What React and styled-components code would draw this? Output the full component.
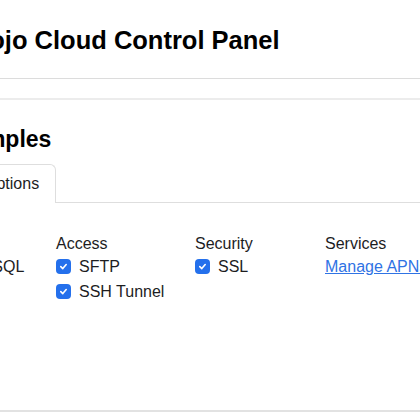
import React from 'react';
import styled, { createGlobalStyle } from 'styled-components';

const GlobalStyle = createGlobalStyle`
    html, body {
        margin: 0;
        padding: 0;
        background: #fff;
        overflow: hidden;
    }
    body {
        font-family: "Liberation Sans", Arial, Helvetica, sans-serif;
        color: #1d1d1f;
    }
`;

const Page = styled.div`
    width: 720px;
    margin-left: -80px;
`;

const Header = styled.header`
    padding: 26px 0 24px 48px;
    border-bottom: 1px solid #dcdcdc;
`;

const Title = styled.h1`
    margin: 0;
    font-size: 25.5px;
    line-height: 28px;
    font-weight: 700;
    color: #000;
`;

const Card = styled.section`
    margin-top: 19px;
    padding: 26px 0 0 24px;
    height: 284px;
    background: #fff;
    border-top: 2px solid #ececec;
    border-bottom: 2px solid #e2e2e2;
`;

const Heading = styled.h2`
    margin: 0;
    font-size: 23px;
    line-height: 26px;
    font-weight: 700;
    color: #000;
`;

const TabList = styled.div`
    display: flex;
    margin-top: 12px;
    padding-left: 23px;
    border-bottom: 1px solid #dedede;
`;

const Tab = styled.div`
    padding: 0 16px;
    height: 38px;
    display: flex;
    align-items: center;
    font-size: 16px;
    color: #1d1d1f;
    background: #fff;
    border: 1px solid ${(p) => (p.$active ? '#dedede' : 'transparent')};
    border-bottom: none;
    border-radius: 6px 6px 0 0;
    margin-bottom: -1px;
`;

const Panel = styled.div`
    display: flex;
    padding: 31px 0 0 4px;
`;

const Column = styled.div`
    width: ${(p) => p.$width}px;
    flex-shrink: 0;
    display: flex;
    flex-direction: column;
`;

const ColumnTitle = styled.div`
    font-size: 16px;
    line-height: 20px;
    height: 20px;
    color: #1d1d1f;
`;

const Option = styled.label`
    display: flex;
    align-items: center;
    gap: 8px;
    height: 25px;
    font-size: 16px;
    color: #1d1d1f;
`;

const Box = styled.span`
    width: 15px;
    height: 15px;
    border-radius: 4px;
    background: #2470ec;
    display: flex;
    align-items: center;
    justify-content: center;
    flex-shrink: 0;
`;

const ServiceLink = styled.a`
    display: flex;
    align-items: center;
    height: 25px;
    font-size: 16px;
    color: #2f73e4;
    text-decoration: underline;
    white-space: nowrap;
`;

const Checkbox = ({ label }) => (
    <Option>
        <Box>
            <svg width="9" height="9" viewBox="0 0 10 10">
                <path
                    d="M2 5.2 L4.2 7.3 L8 2.8"
                    fill="none"
                    stroke="#fff"
                    strokeWidth="1.8"
                    strokeLinecap="round"
                    strokeLinejoin="round"
                />
            </svg>
        </Box>
        {label}
    </Option>
);

const columns = [
    { title: 'DB', width: 108, items: ['MySQL'] },
    { title: 'Access', width: 139, items: ['SFTP', 'SSH Tunnel'] },
    { title: 'Security', width: 130, items: ['SSL'] }
];

export default function App() {
    return (
        <Page>
            <GlobalStyle />
            <Header>
                <Title>Mojo Cloud Control Panel</Title>
            </Header>
            <Card>
                <Heading>Examples</Heading>
                <TabList>
                    <Tab $active>Options</Tab>
                </TabList>
                <Panel>
                    {columns.map((col) => (
                        <Column key={col.title} $width={col.width}>
                            <ColumnTitle>{col.title}</ColumnTitle>
                            {col.items.map((item) => (
                                <Checkbox key={item} label={item} />
                            ))}
                        </Column>
                    ))}
                    <Column $width={200}>
                        <ColumnTitle>Services</ColumnTitle>
                        <ServiceLink href="#">Manage APNs</ServiceLink>
                    </Column>
                </Panel>
            </Card>
        </Page>
    );
}
